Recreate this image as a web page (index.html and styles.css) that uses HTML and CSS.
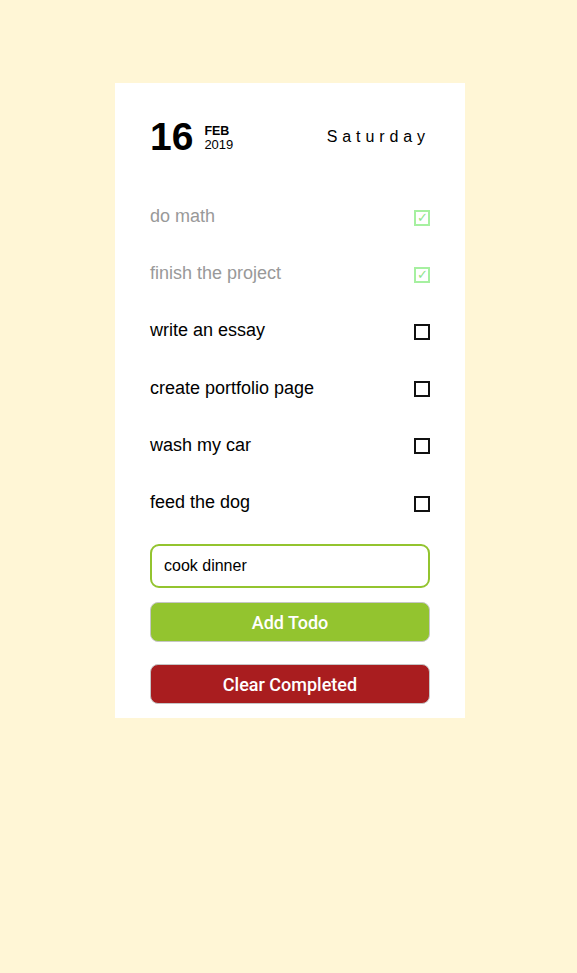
FILE: index.html
```html
<!DOCTYPE html>
<html>
<head>
<meta charset="utf-8">
<link rel="stylesheet" href="styles.css">
</head>
<body>
<div class="card">
  <div class="header">
    <div class="date">
      <span class="day">16</span>
      <div class="monthyear">
        <span class="month">FEB</span>
        <span class="year">2019</span>
      </div>
    </div>
    <div class="weekday">Saturday</div>
  </div>
  <ul class="todos">
    <li class="todo done"><span class="label">do math</span><span class="box checked">✓</span></li>
    <li class="todo done"><span class="label">finish the project</span><span class="box checked">✓</span></li>
    <li class="todo"><span class="label">write an essay</span><span class="box"></span></li>
    <li class="todo"><span class="label">create portfolio page</span><span class="box"></span></li>
    <li class="todo"><span class="label">wash my car</span><span class="box"></span></li>
    <li class="todo"><span class="label">feed the dog</span><span class="box"></span></li>
  </ul>
  <div class="input">cook dinner</div>
  <button class="btn add">Add Todo</button>
  <button class="btn clear">Clear Completed</button>
</div>
</body>
</html>
```
FILE: styles.css
```css
html, body {
  margin: 0;
  padding: 0;
  background: #fff6d6;
  font-family: "Liberation Sans", Arial, sans-serif;
}
.card {
  box-sizing: border-box;
  width: 350px;
  margin: 83px 0 0 115px;
  background: #fff;
  padding: 34px 35px 14px;
}
.header {
  display: flex;
  justify-content: space-between;
  align-items: center;
  height: 40px;
}
.date {
  display: flex;
  align-items: center;
}
.day {
  font-size: 39px;
  font-weight: bold;
  line-height: 40px;
  color: #000;
}
.monthyear {
  display: flex;
  flex-direction: column;
  margin-left: 11px;
  margin-top: 1px;
  line-height: 13px;
}
.month {
  font-size: 12.5px;
  font-weight: bold;
}
.year {
  font-size: 13px;
}
.weekday {
  font-size: 16px;
  letter-spacing: 4.9px;
  margin-top: 0;
}
.todos {
  list-style: none;
  margin: 0;
  padding: 0;
  margin-top: 31px;
}
.todo {
  display: flex;
  justify-content: space-between;
  align-items: center;
  height: 57.2px;
  font-size: 18px;
  color: #000;
}
.todo.done {
  color: #999;
}
.label {
  line-height: 20px;
  margin-top: -1px;
}
.box {
  box-sizing: border-box;
  width: 16px;
  height: 16px;
  border: 2px solid #111;
  margin-top: 2px;
  display: flex;
  align-items: center;
  justify-content: center;
  font-size: 14px;
  line-height: 1;
}
.box.checked {
  border-color: #a6f0a0;
  color: #8fe48a;
  font-size: 13px;
}
.input {
  box-sizing: border-box;
  height: 44px;
  margin-top: 13px;
  border: 2px solid #93c42f;
  border-radius: 9px;
  padding: 0 12px;
  display: flex;
  align-items: center;
  font-size: 16px;
  color: #000;
}
.btn {
  display: block;
  box-sizing: border-box;
  width: 100%;
  height: 40px;
  border: 1px solid #c6c6c6;
  border-radius: 8px;
  color: #fff;
  font-family: Roboto, "Liberation Sans", sans-serif;
  font-size: 18px;
  font-weight: 500;
  padding: 0;
}
.add {
  background: #93c42f;
  margin-top: 14px;
}
.clear {
  background: #a91d1f;
  margin-top: 22px;
}
```
